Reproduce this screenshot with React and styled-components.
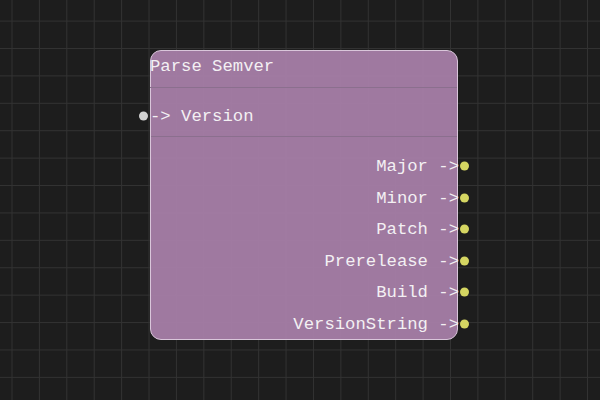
import React from "react";
import styled, { createGlobalStyle } from "styled-components";

const GlobalStyle = createGlobalStyle`
  html, body { margin: 0; padding: 0; background: #1d1d1d; }
  body { font-family: "Liberation Mono", "DejaVu Sans Mono", monospace; }
`;

const Canvas = styled.div`
  position: relative;
  width: 600px;
  height: 400px;
  overflow: hidden;
  background-color: #1d1d1d;
  background-image:
    linear-gradient(to right, #323232 1px, transparent 1px),
    linear-gradient(to bottom, #323232 1px, transparent 1px);
  background-size: 27.42px 27.42px;
  background-position: 11.5px 20.6px;
`;

const Node = styled.div`
  position: absolute;
  left: ${(p) => p.x}px;
  top: ${(p) => p.y}px;
  width: 308px;
  height: 290px;
  box-sizing: border-box;
  display: flex;
  flex-direction: column;
  background: rgba(166, 126, 168, 0.95);
  border: 1px solid #d9c6da;
  border-radius: 11px;
  color: #f3f0f3;
  font-family: "Liberation Mono", "DejaVu Sans Mono", monospace;
  font-size: 17.25px;
  line-height: 20px;
`;

const Title = styled.div`
  height: 37px;
  box-sizing: border-box;
  padding-top: 6px;
  margin-left: -1px;
  border-bottom: 1px solid #8b6f8e;
  white-space: pre;
`;

const Section = styled.div`
  display: flex;
  flex-direction: column;
  gap: ${(p) => p.gap || 0}px;
  padding-top: ${(p) => p.pt}px;
  padding-bottom: ${(p) => p.pb}px;
  border-bottom: ${(p) => (p.divider ? "1px solid #8b6f8e" : "none")};
`;

const Row = styled.div`
  position: relative;
  display: flex;
  justify-content: ${(p) => (p.out ? "flex-end" : "flex-start")};
  margin-left: ${(p) => (p.out ? 0 : -1)}px;
  margin-right: ${(p) => (p.out ? -2 : 0)}px;
  white-space: pre;
`;

const Port = styled.span`
  position: absolute;
  top: 50%;
  width: 9px;
  height: 9px;
  border-radius: 50%;
  transform: translateY(-50%);
  margin-top: -1px;
  background: ${(p) => (p.out ? "#d5d662" : "#d2d2d2")};
  ${(p) => (p.out ? "right: -10px;" : "left: -11px;")}
`;

const outputs = ["Major", "Minor", "Patch", "Prerelease", "Build", "VersionString"];

export default function App() {
  return (
    <>
      <GlobalStyle />
      <Canvas>
        <Node x={150} y={50}>
          <Title>Parse Semver</Title>
          <Section pt={19} pb={9} divider>
            <Row>
              <Port />
              {"-> Version"}
            </Row>
          </Section>
          <Section pt={20} pb={2} gap={11.6}>
            {outputs.map((o) => (
              <Row out key={o}>
                {o + " ->"}
                <Port out />
              </Row>
            ))}
          </Section>
        </Node>
      </Canvas>
    </>
  );
}
